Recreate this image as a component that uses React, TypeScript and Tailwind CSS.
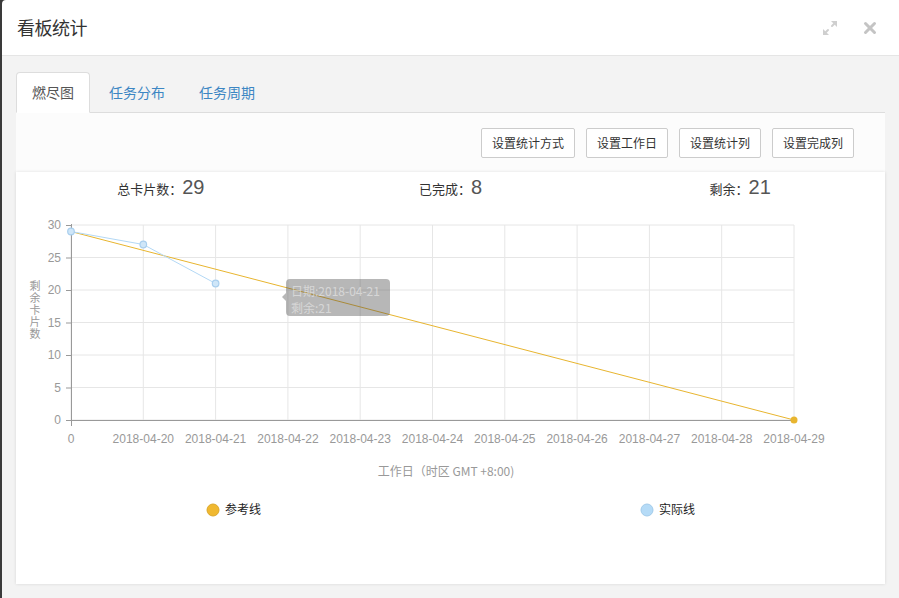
import React from "react";

const X0 = 71;
const DX = 72.3;
const Y0 = 420;
const DY = 6.5;
const px = (i: number) => X0 + i * DX;
const py = (v: number) => Y0 - v * DY;

const dates = [
  "0",
  "2018-04-20",
  "2018-04-21",
  "2018-04-22",
  "2018-04-23",
  "2018-04-24",
  "2018-04-25",
  "2018-04-26",
  "2018-04-27",
  "2018-04-28",
  "2018-04-29",
];

function Chart() {
  const actual = [29, 27, 21];
  return (
    <svg width="868" height="378" className="block">
      <g transform="translate(-16,-206)" fontFamily="'Liberation Sans', 'Noto Sans CJK SC', sans-serif">
        {/* grid */}
        {[0, 5, 10, 15, 20, 25, 30].map((v) => (
          <line key={"h" + v} x1={X0} x2={px(10)} y1={py(v)} y2={py(v)} stroke="#e6e6e6" strokeWidth="1" />
        ))}
        {dates.map((_, i) => (
          <line key={"v" + i} x1={px(i)} x2={px(i)} y1={py(30)} y2={Y0} stroke="#e6e6e6" strokeWidth="1" />
        ))}
        {/* axes */}
        <line x1={X0 + 0.5} x2={X0 + 0.5} y1={py(30) - 1} y2={Y0 + 6} stroke="#999" />
        <line x1={X0 - 5} x2={px(10)} y1={Y0 + 0.5} y2={Y0 + 0.5} stroke="#999" />
        {[0, 5, 10, 15, 20, 25, 30].map((v) => (
          <g key={"yl" + v}>
            <line x1={X0 - 5} x2={X0} y1={py(v) + 0.5} y2={py(v) + 0.5} stroke="#999" />
            <text x={X0 - 10} y={py(v) + 4} fontSize="12" fill="#999" textAnchor="end">
              {v}
            </text>
          </g>
        ))}
        {dates.map((d, i) => (
          <text key={"xl" + i} x={px(i)} y={443} fontSize="12" fill="#999" textAnchor="middle">
            {d}
          </text>
        ))}
        {/* y axis title */}
        <text
          x={35}
          y={280}
          fontSize="11"
          fill="#999"
          fontFamily="'Noto Sans CJK SC', sans-serif"
          style={{ writingMode: "vertical-rl", textOrientation: "upright" }}
          letterSpacing="1"
        >
          剩余卡片数
        </text>
        {/* x axis title */}
        <text x={446} y={476} fontSize="12" fill="#999" textAnchor="middle" fontFamily="'Noto Sans CJK SC', sans-serif">
          工作日（时区 GMT +8:00)
        </text>
        {/* reference line */}
        <line x1={px(0)} y1={py(29)} x2={px(10)} y2={py(0)} stroke="#e8b52f" strokeWidth="1" />
        <circle cx={px(10)} cy={py(0)} r="3.5" fill="#e8b52f" />
        {/* actual line */}
        <polyline
          points={actual.map((v, i) => `${px(i)},${py(v)}`).join(" ")}
          fill="none"
          stroke="#b3d8f5"
          strokeWidth="1"
        />
        {actual.map((v, i) => (
          <circle key={"a" + i} cx={px(i)} cy={py(v)} r="3.3" fill="#cfe6f8" stroke="#a9cfee" strokeWidth="1.2" />
        ))}
        {/* tooltip */}
        <g opacity="0.4">
          <path d="M290,279 h96 a4,4 0 0 1 4,4 v29 a4,4 0 0 1 -4,4 h-96 a4,4 0 0 1 -4,-4 v-11 l-4,-4 l4,-4 v-10 a4,4 0 0 1 4,-4 z" fill="#4a4a4a" />
        </g>
        <text x={291} y={296} fontSize="12" fill="#e4e4e4" opacity="0.7" fontFamily="'Noto Sans CJK SC', sans-serif">
          日期:2018-04-21
        </text>
        <text x={291} y={313} fontSize="12" fill="#e4e4e4" opacity="0.7" fontFamily="'Noto Sans CJK SC', sans-serif">
          剩余:21
        </text>
        {/* legend */}
        <circle cx={213} cy={510} r="6" fill="#f0b830" stroke="#dca82a" strokeWidth="1" />
        <text x={225} y={514} fontSize="12" fill="#222" fontFamily="'Noto Sans CJK SC', sans-serif">
          参考线
        </text>
        <circle cx={647} cy={510} r="6" fill="#b5dbf7" stroke="#a2cbea" strokeWidth="1" />
        <text x={659} y={514} fontSize="12" fill="#222" fontFamily="'Noto Sans CJK SC', sans-serif">
          实际线
        </text>
      </g>
    </svg>
  );
}

export default function App() {
  const font = { fontFamily: "'Noto Sans CJK SC', 'Liberation Sans', sans-serif" };
  return (
    <div className="w-[899px] h-[598px] bg-[#3a3a3a] overflow-hidden" style={font}>
      <div className="ml-[2px] w-[897px] h-[598px] bg-white rounded-tl-[4px] flex flex-col">
        {/* header */}
        <div className="h-[56px] flex items-center justify-between pl-[15px] pr-[22px] border-b border-[#e5e5e5] shrink-0">
          <div className="text-[18px] text-[#333] tracking-[-0.5px]">看板统计</div>
          <div className="flex items-center gap-[24px]">
            <svg width="18" height="18" viewBox="0 0 18 18">
              <g stroke="#cfcfcf" strokeWidth="2" fill="none" strokeLinecap="round">
                <line x1="3" y1="15" x2="7" y2="11" />
                <line x1="11" y1="7" x2="15" y2="3" />
              </g>
              <path d="M10 2 L16 2 L16 8 Z" fill="#cfcfcf" />
              <path d="M2 10 L2 16 L8 16 Z" fill="#cfcfcf" />
            </svg>
            <svg width="14" height="14" viewBox="0 0 14 14">
              <g stroke="#c4c4c4" strokeWidth="3" strokeLinecap="round">
                <line x1="2.5" y1="2.5" x2="11.5" y2="11.5" />
                <line x1="11.5" y1="2.5" x2="2.5" y2="11.5" />
              </g>
            </svg>
          </div>
        </div>
        {/* body */}
        <div className="flex-1 bg-[#f3f3f3] px-[14px] pt-[16px]">
          <div className="flex h-[41px] border-b border-[#dddddd] text-[14px]">
            <div className="px-[15px] flex items-center bg-white border border-[#dddddd] border-b-white rounded-t-[4px] text-[#555] h-[41px]">
              燃尽图
            </div>
            <div className="ml-[2px] px-[17px] flex items-center text-[#3c86c3]">任务分布</div>
            <div className="px-[17px] flex items-center text-[#3c86c3]">任务周期</div>
          </div>
          <div className="bg-[#fcfcfc]">
            <div className="h-[59px] flex items-start justify-end gap-[11px] pt-[15px] pr-[31px]">
              {["设置统计方式", "设置工作日", "设置统计列", "设置完成列"].map((t) => (
                <div
                  key={t}
                  className="h-[30px] px-[10px] flex items-center border border-[#cccccc] rounded-[2px] bg-white text-[12px] text-[#333]"
                >
                  {t}
                </div>
              ))}
            </div>
            <div className="h-[412px] bg-white shadow-[0_0_3px_rgba(0,0,0,0.12)] flex flex-col">
              <div className="h-[34px] grid grid-cols-3 text-center items-start">
                <div className="flex items-baseline justify-center">
                  <span className="text-[13px] text-[#333]">总卡片数：</span>
                  <span className="text-[20px] text-[#555] font-['Liberation_Sans']">29</span>
                </div>
                <div className="flex items-baseline justify-center">
                  <span className="text-[13px] text-[#333]">已完成：</span>
                  <span className="text-[20px] text-[#555] font-['Liberation_Sans']">8</span>
                </div>
                <div className="flex items-baseline justify-center">
                  <span className="text-[13px] text-[#333]">剩余：</span>
                  <span className="text-[20px] text-[#555] font-['Liberation_Sans']">21</span>
                </div>
              </div>
              <Chart />
            </div>
          </div>
        </div>
      </div>
    </div>
  );
}
